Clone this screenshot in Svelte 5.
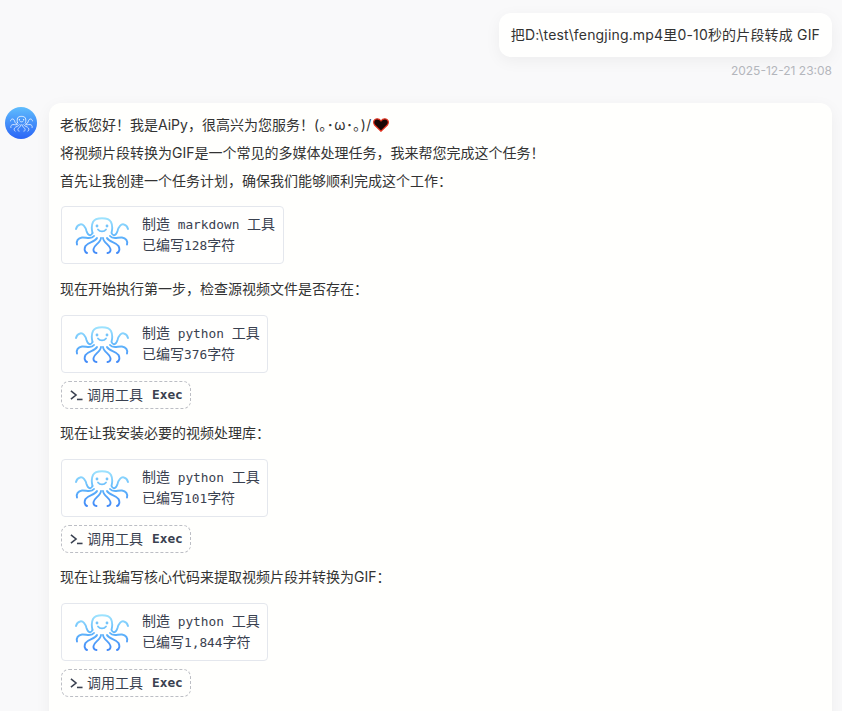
<script>
const steps = [
	{ lead: '', tool: 'markdown', chars: '128', exec: false },
	{ lead: '现在开始执行第一步，检查源视频文件是否存在：', tool: 'python', chars: '376', exec: true },
	{ lead: '现在让我安装必要的视频处理库：', tool: 'python', chars: '101', exec: true },
	{ lead: '现在让我编写核心代码来提取视频片段并转换为GIF：', tool: 'python', chars: '1,844', exec: true },
];
</script>

{#snippet octopus(id, light)}
	<svg class="octopus" viewBox="0 0 54 38" fill="none" stroke-width="1.9" stroke-linecap="round">
		<defs>
			<linearGradient {id} gradientUnits="userSpaceOnUse" x1="0" y1="0" x2="0" y2="38">
				<stop offset="0" stop-color={light ? '#ffffff' : '#a5e8fe'} />
				<stop offset="0.5" stop-color={light ? '#f2f7ff' : '#62b8fb'} />
				<stop offset="1" stop-color={light ? '#dbe8ff' : '#3f87f8'} />
			</linearGradient>
		</defs>
		<g stroke="url(#{id})">
			<path d="M17.5 17 C16.5 13 16.5 9 18 6 C20.5 1 33.5 1 36 6 C37.5 9 37.5 13 36.5 17 C38 20.5 41 20 42.5 15 C43.5 11 46 7.5 49 8.5 C51 9 52.5 11 53 13" />
			<path d="M17.5 17 C16 20.5 13 20 11.5 15 C10.5 11 8 7.5 5 8.5 C3 9 1.5 11 1 13" />
			<path d="M19 20 C16 24 11 21 7 21.5 C3 22 1 25 2 28.5" />
			<path d="M35 20 C38 24 43 21 47 21.5 C51 22 53 25 52 28.5" />
			<path d="M22 22 C20 26 13 26 10.5 30 C9 33 9.5 36 12 37" />
			<path d="M32 22 C34 26 41 26 43.5 30 C45 33 44.5 36 42 37" />
			<path d="M26 22 C25.5 27 19 29 18.5 33 C18.2 35.5 19.5 37 21.5 37" />
			<path d="M28 22 C28.5 27 35 29 35.5 33 C35.8 35.5 34.5 37 32.5 37" />
			<path d="M23 13.5 C25 16 29 16 31 13.5" />
		</g>
		<circle cx="22" cy="10" r="1.4" fill={light ? '#ffffff' : '#74c4fb'} />
		<circle cx="32" cy="10" r="1.4" fill={light ? '#ffffff' : '#74c4fb'} />
	</svg>
{/snippet}

<div class="chat">
	<div class="user-msg">
		<div class="user-bubble">把D:\test\fengjing.mp4里0-10秒的片段转成 GIF</div>
		<div class="time">2025-12-21 23:08</div>
	</div>

	<div class="bot-msg">
		<div class="avatar">{@render octopus('oct-avatar', true)}</div>
		<div class="bot-bubble">
			<p>
				老板您好！我是AiPy，很高兴为您服务！<span class="kaomoji">(｡･ω･｡)/</span><svg class="heart" viewBox="0 0 16 14"><path d="M8 13.2 L1.4 6.8 C-0.4 3.6 1.4 0.8 4.2 0.8 C6 0.8 7.2 1.8 8 3 C8.8 1.8 10 0.8 11.8 0.8 C14.6 0.8 16.4 3.6 14.6 6.8 Z" fill="#1a0606" stroke="#e0301e" stroke-width="1.2" /></svg>
			</p>
			<p>将视频片段转换为GIF是一个常见的多媒体处理任务，我来帮您完成这个任务！</p>
			<p>首先让我创建一个任务计划，确保我们能够顺利完成这个工作：</p>

			{#each steps as step, i}
				{#if step.lead}
					<p class="lead">{step.lead}</p>
				{/if}
				<div class="tool-card">
					{@render octopus(`oct-${i}`, false)}
					<div class="tool-text">
						<div>制造<code>{` ${step.tool} `}</code>工具</div>
						<div>已编写<code>{step.chars}</code>字符</div>
					</div>
				</div>
				{#if step.exec}
					<div class="exec">
						<svg class="prompt" viewBox="0 0 14 12" fill="none" stroke="currentColor" stroke-width="1.7"><path d="M1 1.5 L6.5 6 L1 10.5" /><path d="M7.5 10.8 H13.5" /></svg>
						<span>调用工具</span>
						<code>Exec</code>
					</div>
				{/if}
			{/each}
		</div>
	</div>
</div>

<style>
	:global(body) {
		margin: 0;
		background: #f9f9fa;
	}

	.chat {
		height: 711px;
		overflow: hidden;
		box-sizing: border-box;
		padding: 13px 10px 0 5px;
		font-family: Inter, "Noto Sans CJK SC", sans-serif;
		font-size: 14px;
		color: #333;
	}

	.user-msg {
		display: flex;
		flex-direction: column;
		align-items: flex-end;
	}

	.user-bubble {
		background: #fffffe;
		border-radius: 12px;
		padding: 12px;
		line-height: 20px;
		letter-spacing: 0.17px;
		box-shadow: 0 4px 16px rgba(0, 0, 0, 0.05);
	}

	.time {
		margin-top: 6px;
		font-size: 12px;
		line-height: 16px;
		color: #b4b6bc;
	}

	.bot-msg {
		display: flex;
		gap: 12px;
		margin-top: 24px;
	}

	.avatar {
		flex: none;
		width: 32px;
		height: 32px;
		margin-top: 4px;
		border-radius: 50%;
		background: linear-gradient(#5fbdfd, #2a64f6);
		display: flex;
		align-items: center;
		justify-content: center;
	}

	.avatar .octopus {
		width: 23px;
		height: 17px;
	}

	.bot-bubble {
		flex: 1;
		min-width: 0;
		background: #fffffd;
		border-radius: 12px;
		padding: 8px 12px 40px;
		box-shadow: 0 4px 16px rgba(0, 0, 0, 0.05);
	}

	p {
		margin: 0 0 0 -1px;
		line-height: 28px;
	}

	.lead {
		margin-top: 11px;
		margin-bottom: 12px;
	}

	.kaomoji {
		letter-spacing: 0.4px;
	}

	.heart {
		width: 16px;
		height: 14px;
		margin-left: 1px;
		vertical-align: -2px;
	}

	code {
		font-family: "DejaVu Sans Mono", "Noto Sans CJK SC", monospace;
		font-size: 12.8px;
		line-height: 1;
		white-space: pre;
	}

	.tool-card {
		display: flex;
		align-items: center;
		width: fit-content;
		height: 58px;
		box-sizing: border-box;
		margin-top: 11px;
		padding: 0 7.5px 0 13px;
		gap: 13px;
		background: #fffffe;
		border: 1px solid #e4e7ed;
		border-radius: 4px;
		color: #3a4150;
	}

	.lead + .tool-card {
		margin-top: 0;
	}

	.octopus {
		width: 54px;
		height: 38px;
		flex: none;
	}

	.tool-text {
		line-height: 21px;
		padding-bottom: 2px;
	}

	.exec {
		display: flex;
		align-items: center;
		width: fit-content;
		height: 28px;
		box-sizing: border-box;
		margin: 8px 0 10px;
		padding: 0 7px 0 8px;
		gap: 4px;
		border: 1px dashed #bcbec4;
		border-radius: 8px;
		color: #3a4150;
	}

	.exec span {
		line-height: 14px;
		margin-top: -1px;
	}

	.exec code {
		font-weight: 700;
		margin-left: 5px;
	}

	.exec + .lead {
		margin-top: 10px;
	}

	.prompt {
		width: 13px;
		height: 12px;
	}
</style>
